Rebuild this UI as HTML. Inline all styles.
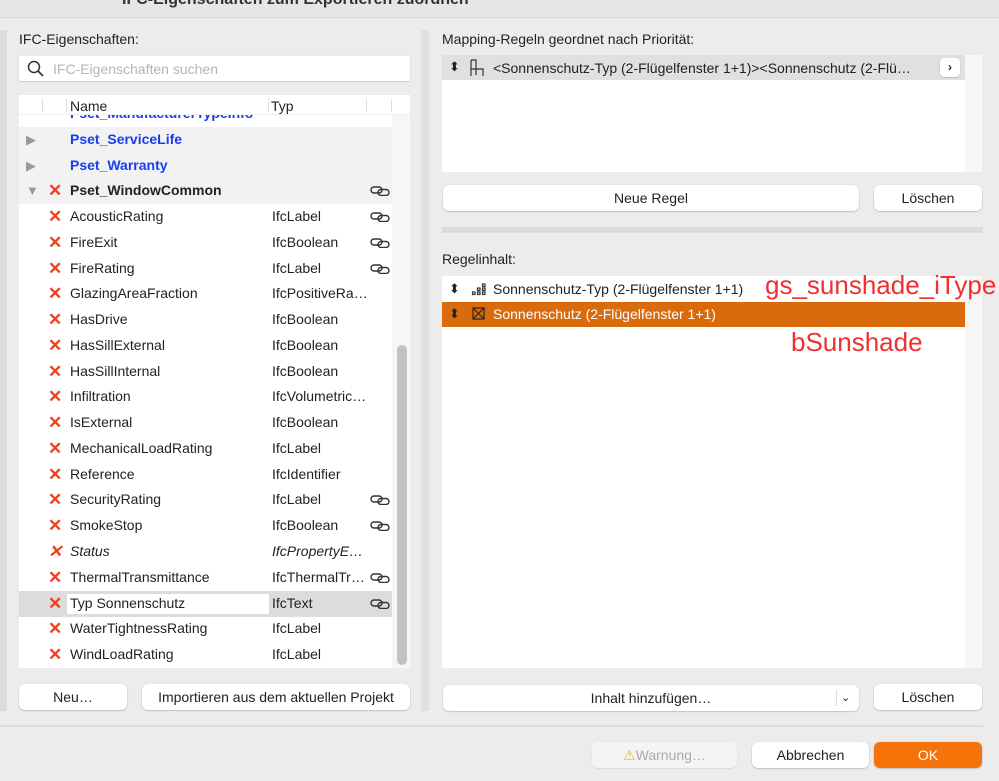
<!DOCTYPE html>
<html><head><meta charset="utf-8"><style>
*{box-sizing:border-box;margin:0;padding:0}
body{width:999px;height:781px;overflow:hidden;background:#ececec;font-family:"Liberation Sans",sans-serif;font-size:14px;color:#222;position:relative}
.a{position:absolute}
.btn{position:absolute;background:#fff;border-radius:6px;box-shadow:0 0.5px 1.5px rgba(0,0,0,.3);text-align:center;line-height:26px;height:26px;font-size:14px;color:#222}
.row{position:absolute;left:19px;width:373px;height:25.7px;line-height:25.7px}
.row .x{position:absolute;left:29px;top:0;color:#f0401c;font-size:17px;font-weight:bold}
.row .n{position:absolute;left:51px}
.row .t{position:absolute;left:253px}
.row .l{position:absolute;left:351px;top:8px;width:20px;height:10px}
.g{background:#f2f2f2}
.tri{position:absolute;left:7px;color:#999;font-size:13px}
</style></head><body>
<svg width="0" height="0" style="position:absolute"><defs><symbol id="lk" viewBox="0 0 20 10"><rect x="1" y="1" width="11" height="6" rx="3" fill="none" stroke="#333" stroke-width="1.4"/><rect x="8" y="3.5" width="11" height="6" rx="3" fill="none" stroke="#333" stroke-width="1.4"/></symbol></defs></svg>
<div class="a" style="left:0;top:0;width:999px;height:18px;background:#e6e6e6;border-bottom:1px solid #d6d6d6"></div>
<div class="a" style="left:122px;top:-9px;font-weight:bold;font-size:16px;color:#333">IFC-Eigenschaften zum Exportieren zuordnen</div>
<div class="a" style="left:0;top:30px;width:7px;height:681px;background:#dcdcdc"></div>
<div class="a" style="left:421px;top:30px;width:8px;height:681px;background:#e0e0e0"></div>
<div class="a" style="left:0;top:725px;width:983px;height:2px;background:#dcdcdc"></div>

<div class="a" style="left:19px;top:31px">IFC-Eigenschaften:</div>
<div class="a" style="left:19px;top:56px;width:391px;height:25px;background:#fff;box-shadow:0 0.5px 1px rgba(0,0,0,.25)"></div>
<svg class="a" style="left:27px;top:60px" width="18" height="18" viewBox="0 0 18 18"><circle cx="7" cy="7" r="5.5" fill="none" stroke="#333" stroke-width="1.5"/><path d="M11 11l5 5" stroke="#333" stroke-width="1.7"/></svg>
<div class="a" style="left:53px;top:61px;color:#b5b5b5">IFC-Eigenschaften suchen</div>

<div class="a" style="left:19px;top:95px;width:391px;height:573px;background:#fff"></div>
<div class="a" style="left:392px;top:115px;width:18px;height:553px;background:#f6f6f6"></div>
<div class="a" style="left:397px;top:345px;width:10px;height:320px;background:#c2c2c2;border-radius:5px"></div>
<div class="a" style="left:70px;top:105px;color:#1a3cf0;font-weight:bold;clip-path:inset(8px 0 0 0)">Pset_ManufacturerTypeInfo</div>
<div class="a" style="left:19px;top:95px;width:391px;height:20px;background:#fff;border-bottom:1px solid #eee"></div>
<div class="a" style="left:42px;top:99px;width:1px;height:13px;background:#ddd"></div>
<div class="a" style="left:66px;top:99px;width:1px;height:13px;background:#ddd"></div>
<div class="a" style="left:268px;top:99px;width:1px;height:13px;background:#ddd"></div>
<div class="a" style="left:366px;top:99px;width:1px;height:13px;background:#ddd"></div>
<div class="a" style="left:391px;top:99px;width:1px;height:13px;background:#ddd"></div>
<div class="a" style="left:70px;top:98px">Name</div>
<div class="a" style="left:271px;top:98px">Typ</div>

<div class="row g" style="top:127px"><span class="tri">▶</span><span class="n" style="color:#1a3cf0;font-weight:bold">Pset_ServiceLife</span></div>
<div class="row g" style="top:153px"><span class="tri">▶</span><span class="n" style="color:#1a3cf0;font-weight:bold">Pset_Warranty</span></div>
<div class="row g" style="top:178px"><span class="tri">▼</span><span class="x">✕</span><span class="n" style="font-weight:bold">Pset_WindowCommon</span><svg class="l"><use href="#lk"/></svg></div>
<div class="row" style="top:204px"><span class="x">✕</span><span class="n">AcousticRating</span><span class="t">IfcLabel</span><svg class="l"><use href="#lk"/></svg></div>
<div class="row" style="top:230px"><span class="x">✕</span><span class="n">FireExit</span><span class="t">IfcBoolean</span><svg class="l"><use href="#lk"/></svg></div>
<div class="row" style="top:256px"><span class="x">✕</span><span class="n">FireRating</span><span class="t">IfcLabel</span><svg class="l"><use href="#lk"/></svg></div>
<div class="row" style="top:281px"><span class="x">✕</span><span class="n">GlazingAreaFraction</span><span class="t">IfcPositiveRa…</span></div>
<div class="row" style="top:307px"><span class="x">✕</span><span class="n">HasDrive</span><span class="t">IfcBoolean</span></div>
<div class="row" style="top:333px"><span class="x">✕</span><span class="n">HasSillExternal</span><span class="t">IfcBoolean</span></div>
<div class="row" style="top:359px"><span class="x">✕</span><span class="n">HasSillInternal</span><span class="t">IfcBoolean</span></div>
<div class="row" style="top:384px"><span class="x">✕</span><span class="n">Infiltration</span><span class="t">IfcVolumetric…</span></div>
<div class="row" style="top:410px"><span class="x">✕</span><span class="n">IsExternal</span><span class="t">IfcBoolean</span></div>
<div class="row" style="top:436px"><span class="x">✕</span><span class="n">MechanicalLoadRating</span><span class="t">IfcLabel</span></div>
<div class="row" style="top:462px"><span class="x">✕</span><span class="n">Reference</span><span class="t">IfcIdentifier</span></div>
<div class="row" style="top:487px"><span class="x">✕</span><span class="n">SecurityRating</span><span class="t">IfcLabel</span><svg class="l"><use href="#lk"/></svg></div>
<div class="row" style="top:513px"><span class="x">✕</span><span class="n">SmokeStop</span><span class="t">IfcBoolean</span><svg class="l"><use href="#lk"/></svg></div>
<div class="row" style="top:539px;font-style:italic"><span class="x">✕</span><span class="n">Status</span><span class="t">IfcPropertyE…</span></div>
<div class="row" style="top:565px"><span class="x">✕</span><span class="n">ThermalTransmittance</span><span class="t">IfcThermalTr…</span><svg class="l"><use href="#lk"/></svg></div>
<div class="row" style="top:591px;background:#dcdcdc"><span class="x">✕</span><span class="a" style="left:48px;top:3px;width:202px;height:20px;background:#fff"></span><span class="n">Typ Sonnenschutz</span><span class="t">IfcText</span><svg class="l"><use href="#lk"/></svg></div>
<div class="row" style="top:616px"><span class="x">✕</span><span class="n">WaterTightnessRating</span><span class="t">IfcLabel</span></div>
<div class="row" style="top:642px"><span class="x">✕</span><span class="n">WindLoadRating</span><span class="t">IfcLabel</span></div>

<div class="btn" style="left:19px;top:684px;width:108px">Neu…</div>
<div class="btn" style="left:142px;top:684px;width:268px">Importieren aus dem aktuellen Projekt</div>

<div class="a" style="left:442px;top:31px">Mapping-Regeln geordnet nach Priorität:</div>
<div class="a" style="left:442px;top:55px;width:540px;height:117px;background:#f7f7f7"></div>
<div class="a" style="left:442px;top:55px;width:523px;height:117px;background:#fff"></div>
<div class="a" style="left:442px;top:55px;width:523px;height:25px;background:#e0e0e0"></div>
<div class="a" style="left:449px;top:59px;font-size:13px">⬍</div>
<svg class="a" style="left:468px;top:59px" width="18" height="18" viewBox="0 0 18 18" fill="none" stroke="#333" stroke-width="1.2"><path d="M3 1v16M3 10h12v7M8 10v6M3 1h5v9"/></svg>
<div class="a" style="left:493px;top:60px">&lt;Sonnenschutz-Typ (2-Flügelfenster 1+1)&gt;&lt;Sonnenschutz (2-Flü…</div>
<div class="a" style="left:940px;top:58px;width:20px;height:19px;background:#fff;border-radius:4px;box-shadow:0 0.5px 1px rgba(0,0,0,.3);text-align:center;line-height:18px;font-weight:bold;font-size:12px">›</div>
<div class="btn" style="left:443px;top:185px;width:416px">Neue Regel</div>
<div class="btn" style="left:874px;top:185px;width:108px">Löschen</div>
<div class="a" style="left:442px;top:227px;width:541px;height:6px;background:#dcdcdc"></div>
<div class="a" style="left:442px;top:251px">Regelinhalt:</div>
<div class="a" style="left:442px;top:276px;width:540px;height:392px;background:#f7f7f7"></div>
<div class="a" style="left:442px;top:276px;width:523px;height:392px;background:#fff"></div>
<div class="a" style="left:449px;top:281px;font-size:13px">⬍</div>
<svg class="a" style="left:471px;top:281px" width="16" height="16" viewBox="0 0 16 16" fill="none" stroke="#333" stroke-width="1.2"><rect x="1.5" y="11" width="2.5" height="2.5"/><rect x="6.5" y="11" width="2.5" height="2.5"/><rect x="11.5" y="11" width="2.5" height="2.5"/><rect x="6.5" y="7" width="2.5" height="2.5"/><rect x="11.5" y="7" width="2.5" height="2.5"/><rect x="11.5" y="3" width="2.5" height="2.5"/></svg>
<div class="a" style="left:493px;top:281px">Sonnenschutz-Typ (2-Flügelfenster 1+1)</div>
<div class="a" style="left:442px;top:302px;width:523px;height:25px;background:#d96b0c;color:#fff"></div>
<div class="a" style="left:449px;top:306px;font-size:13px">⬍</div>
<svg class="a" style="left:472px;top:307px" width="13" height="13" viewBox="0 0 13 13" fill="none" stroke="#222" stroke-width="1.2"><rect x="1" y="1" width="11" height="11"/><path d="M1 1l11 11M12 1L1 12"/></svg>
<div class="a" style="left:493px;top:306px;color:#fff">Sonnenschutz (2-Flügelfenster 1+1)</div>
<div class="a" style="left:765px;top:270px;color:#f03030;font-size:26px">gs_sunshade_iType</div>
<div class="a" style="left:791px;top:327px;color:#f03030;font-size:26px">bSunshade</div>

<div class="btn" style="left:443px;top:685px;width:416px">Inhalt hinzufügen…<span class="a" style="left:393px;top:5px;width:1px;height:16px;background:#ddd"></span><span class="a" style="left:398px;top:0;font-size:11px">⌄</span></div>
<div class="btn" style="left:874px;top:684px;width:108px">Löschen</div>

<div class="btn" style="left:592px;top:742px;width:145px;background:#f4f4f4;color:#aaa;box-shadow:0 0.5px 1px rgba(0,0,0,.15)"><span style="color:#e8c300">⚠</span>Warnung…</div>
<div class="btn" style="left:752px;top:742px;width:117px">Abbrechen</div>
<div class="btn" style="left:874px;top:742px;width:108px;background:#f57308;color:#fff">OK</div>
</body></html>
